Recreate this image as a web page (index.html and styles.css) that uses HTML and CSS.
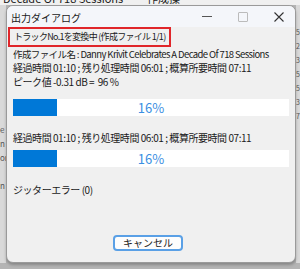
FILE: index.html
```html
<!DOCTYPE html>
<html lang="ja">

<head>
    <meta charset="UTF-8">
    <meta name="viewport" content="width=device-width, initial-scale=1.0">
    <title>出力ダイアログ</title>
    <link rel="stylesheet" href="styles.css">
</head>

<body>
    <!-- 後ろのウィンドウ -->
    <div class="desktop">
        <div class="behind-top">
            <span class="behind-title">Decade Of 718 Sessions</span>
            <span class="behind-label">作成操</span>
        </div>
        <div class="behind-left">e<br>n<br>or<br><br>n</div>
        <div class="behind-right">5<br>2<br>3<br>5<br>5<br>3<br>7</div>

        <!-- ダイアログ -->
        <div class="dialog">
            <div class="titlebar">
                <span class="title">出力ダイアログ</span>
                <div class="controls">
                    <span class="ctl min"></span>
                    <span class="ctl max"></span>
                    <span class="ctl close">
                        <svg width="10" height="10" viewBox="0 0 10 10">
                            <path d="M0.5 0.5 L9.5 9.5 M9.5 0.5 L0.5 9.5" stroke="#333" stroke-width="1.1" />
                        </svg>
                    </span>
                </div>
            </div>

            <div class="body">
                <div class="status">トラックNo.1を変換中 (作成ファイル 1/1)</div>
                <div class="line name">作成ファイル名 : Danny Krivit Celebrates A Decade Of 718 Sessions</div>
                <div class="line">経過時間 01:10 ; 残り処理時間 06:01 ; 概算所要時間 07:11</div>
                <div class="line">ピーク値 -0.31 dB =&nbsp; 96 %</div>

                <div class="bar first">
                    <div class="fill" style="width: 16%"></div>
                    <span class="pct">16%</span>
                </div>

                <div class="line second">経過時間 01:10 ; 残り処理時間 06:01 ; 概算所要時間 07:11</div>

                <div class="bar">
                    <div class="fill" style="width: 16%"></div>
                    <span class="pct">16%</span>
                </div>

                <div class="line jitter">ジッターエラー (0)</div>

                <div class="footer">
                    <div class="btn">キャンセル</div>
                </div>
            </div>
        </div>
    </div>
</body>

</html>
```

FILE: styles.css
```css
body {
    margin: 0;
    font-family: "Noto Sans CJK JP", "Noto Sans", sans-serif;
    font-size: 10px;
    color: #1a1a1a;
}

.desktop {
    position: relative;
    width: 300px;
    height: 269px;
    background-color: #b4b4b4;
    overflow: hidden;
}

/* 後ろのウィンドウの端 */
.behind-top {
    position: absolute;
    left: 0;
    top: -8px;
    width: 300px;
    height: 13px;
    background-color: #f0f0f0;
    font-size: 11px;
    line-height: 13px;
    white-space: nowrap;
}

.behind-title {
    position: absolute;
    left: 3px;
}

.behind-label {
    position: absolute;
    left: 147px;
}

.behind-left {
    position: absolute;
    left: 0;
    top: 5px;
    width: 6px;
    height: 258px;
    background-color: #d9d9d9;
    color: #555;
    font-size: 8px;
    line-height: 14px;
    padding-top: 118px;
    box-sizing: border-box;
    overflow: hidden;
}

.behind-right {
    position: absolute;
    right: 0;
    top: 5px;
    width: 4px;
    height: 258px;
    background-color: #d9d9d9;
    color: #555;
    font-size: 7px;
    line-height: 14px;
    padding-top: 20px;
    box-sizing: border-box;
    overflow: hidden;
}

.dialog {
    position: absolute;
    left: 6px;
    top: 5px;
    width: 290px;
    height: 258px;
    box-sizing: border-box;
    border: 1px solid #9a9a9a;
    border-radius: 7px;
    background-color: #f0f0f0;
    overflow: hidden;
    display: flex;
    flex-direction: column;
    box-shadow: 0 2px 3px rgba(0, 0, 0, 0.25);
}

.titlebar {
    height: 21px;
    flex-shrink: 0;
    background-color: #f4f6fa;
    display: flex;
    align-items: center;
    justify-content: space-between;
}

.title {
    padding-left: 4px;
    font-size: 10px;
    padding-top: 1px;
}

.controls {
    display: flex;
    height: 100%;
    margin-right: -2px;
}

.ctl {
    width: 36px;
    height: 100%;
    display: flex;
    justify-content: center;
    align-items: center;
}

.min::before {
    content: "";
    width: 10px;
    height: 1px;
    background-color: #555;
}

.max::before {
    content: "";
    width: 8px;
    height: 8px;
    border: 1px solid #bbb;
    border-radius: 1px;
}

.body {
    flex: 1;
    padding: 0 6px;
    display: flex;
    flex-direction: column;
}

.status {
    align-self: flex-start;
    border: 2px solid #e0262a;
    margin-left: -5px;
    padding: 1px 3px 1px 4px;
    line-height: 14px;
    font-size: 9px;
    letter-spacing: -0.7px;
    white-space: nowrap;
}

.line {
    line-height: 14px;
    white-space: nowrap;
    letter-spacing: -0.45px;
}

.line.name {
    font-size: 9.5px;
    letter-spacing: -0.6px;
}

.bar {
    position: relative;
    height: 17px;
    margin-top: 5px;
    width: 276px;
    background-color: #ffffff;
}

.bar.first {
    margin-top: 10px;
}

.fill {
    height: 100%;
    background-color: #0078d7;
}

.pct {
    position: absolute;
    left: 0;
    right: 0;
    top: 0;
    text-align: center;
    font-size: 13px;
    line-height: 17px;
    color: #3b8fe2;
}

.second {
    margin-top: 15px;
}

.jitter {
    margin-top: 16px;
}

.footer {
    flex: 1;
    display: flex;
    justify-content: center;
    align-items: flex-end;
    padding-bottom: 11px;
}

.btn {
    width: 66px;
    height: 12px;
    border: 2px solid #5aa0e6;
    border-radius: 4px;
    background-color: #fdfdfd;
    text-align: center;
    line-height: 12px;
    font-size: 10px;
    margin-left: -6px;
}
```
